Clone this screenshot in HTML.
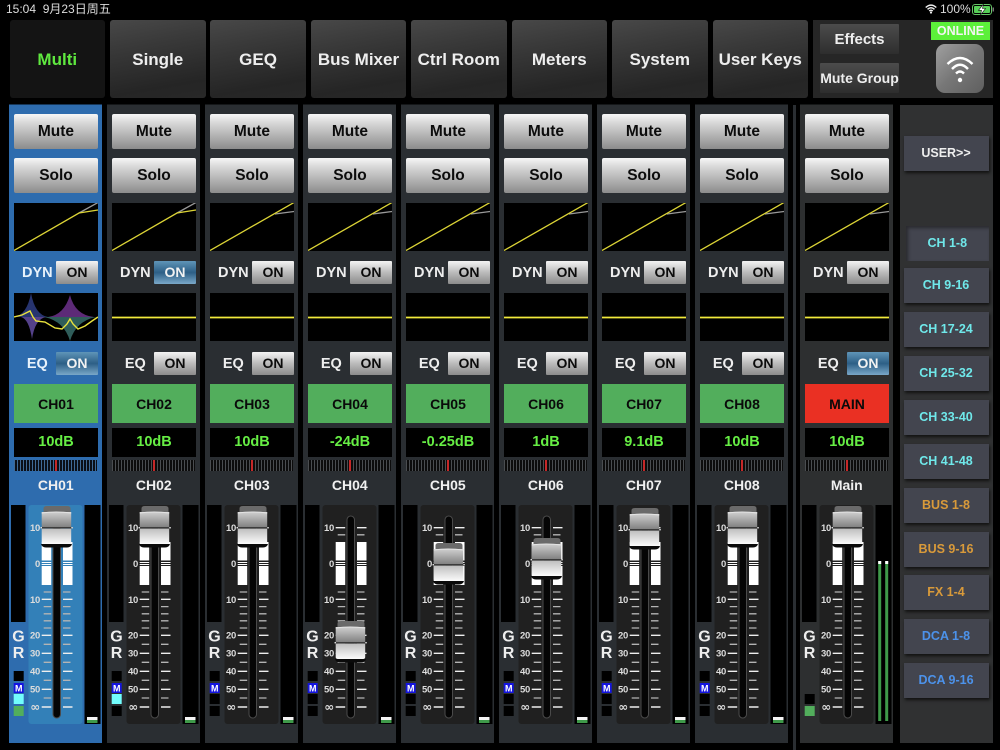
<!DOCTYPE html>
<html><head><meta charset="utf-8"><style>
html,body{margin:0;padding:0;background:#000;width:1000px;height:750px;overflow:hidden}
body{position:relative;font-family:"Liberation Sans","Noto Sans CJK SC",sans-serif;font-weight:bold}
div,b,i,svg.a,span{position:absolute;display:block;font-style:normal;box-sizing:border-box;text-align:center}
.st{top:2px;font-size:12px;font-weight:normal;color:#ddd;line-height:14px;white-space:pre}
.tab{top:19.5px;height:78px;width:95.5px;border-radius:3px;background:linear-gradient(170deg,#484848,#3a3a3a 30%,#252525 80%,#282828);color:#eee;font-size:17px;line-height:79px}
.tb2{background:linear-gradient(#4c4c4c,#2e2e2e);color:#eee;left:820px;width:79px;font-size:14px;height:30px;line-height:31px;border-radius:1px}
.s{top:0;width:93px;height:743px;background:linear-gradient(transparent 104.5px,var(--b,#2a2e32) 104.5px)}
.bt{left:4.7px;width:84px;height:34.5px;border-radius:2px;background:linear-gradient(#f6f6f6,#d8d8d8 25%,#8c8c8c);color:#0c0c0c;font-size:15.5px;line-height:36px}
.m{top:114px}.so{top:158px}
svg.g{position:absolute;left:4.7px;width:84px;height:48px;background:#000;display:block}
.g1{top:203px}.g2{top:293px}
.lb{left:8px;width:40px;color:#eee;font-size:14.5px;line-height:24px;height:24px}
.on{left:46.7px;width:42px;height:22.5px;border-radius:1px;background:linear-gradient(#f4f4f4,#bbb 50%,#8c8c8c);color:#0c0c0c;font-size:14px;line-height:22px}
.on.bl{background:linear-gradient(#5f95b8,#2d5f86 50%,#7aa8c8);color:#f2f2f2}
.d{top:261px}.e{top:352px}
.nm{left:4.7px;width:84px;top:384px;height:39px;background:#52ae5c;color:#0a0a0a;font-size:14px;line-height:40px}
.nm.r{background:#ea3023}
.vl{left:4.7px;width:84px;top:428px;height:29px;background:#000;color:#66ee44;font-size:14.5px;line-height:29px}
.pn{left:4.7px;width:83px;top:460px;height:10.5px;background:repeating-linear-gradient(90deg,#4a4d50 0 1px,#0c0c0c 1px 3px)}
.pn::after{content:"";position:absolute;left:41px;top:0;width:2px;height:10.5px;background:#c62828}
.n2{left:0;width:93px;top:476px;height:18px;color:#f0f0f0;font-size:14px;line-height:18px}
svg.f{position:absolute;left:0;top:0;width:93px;height:750px;display:block;overflow:visible}
svg.f text{font:bold 9.5px "Liberation Sans Narrow","Liberation Sans",sans-serif;fill:#dcdcdc;text-anchor:end;letter-spacing:-.3px}
svg.f text.w{font:bold 16px "Liberation Sans",sans-serif;fill:#eee;text-anchor:middle;letter-spacing:0}
svg.f text.mm{font:bold 9px "Liberation Sans",sans-serif;fill:#fff;text-anchor:middle;letter-spacing:0}
svg.f text.inf{font:bold 12px "DejaVu Sans",sans-serif}
.rb{left:903.5px;width:85px;height:35px;background:#43454f;box-shadow:1px 2px 3px #111;font-size:12.5px;line-height:35px;color:#6fe8ea}
.o{color:#d99a3a}.u{color:#4c92ea}
</style></head><body>
<svg class="a" width="0" height="0" style="position:absolute"><defs>
<g id="t">
<rect x="44" y="516" width="7.5" height="202" rx="3.8" fill="#050505" stroke="#4a4a4a"/>
<g fill="#fff"><rect x="32.7" y="542" width="9.5" height="18.5"/><rect x="54" y="542" width="9.5" height="18.5"/><rect x="32.7" y="566" width="9.5" height="19"/><rect x="54" y="566" width="9.5" height="19"/>
<rect x="32.7" y="562" width="9.5" height="1"/><rect x="54" y="562" width="9.5" height="1"/><rect x="32.7" y="564" width="9.5" height="1"/><rect x="54" y="564" width="9.5" height="1"/></g>
<path fill="none" stroke="#eee" stroke-width="1.4" d="M32.7 527.7h9.5M54 527.7h9.5M32.7 599.3h9.5M54 599.3h9.5M32.7 635.3h9.5M54 635.3h9.5M32.7 653.3h9.5M54 653.3h9.5M32.7 671.3h9.5M54 671.3h9.5M32.7 689.3h9.5M54 689.3h9.5M32.7 707h9.5M54 707h9.5"/>
<path fill="none" stroke="#b4b4b4" stroke-width="1.3" d="M34.7 534.8h7.5M54 534.8h7.5M34.7 592h7.5M54 592h7.5M34.7 606.6h7.5M54 606.6h7.5M34.7 613.8h7.5M54 613.8h7.5M34.7 620.8h7.5M54 620.8h7.5M34.7 628h7.5M54 628h7.5M34.7 644.3h7.5M54 644.3h7.5M34.7 662.3h7.5M54 662.3h7.5M34.7 680.3h7.5M54 680.3h7.5M34.7 698h7.5M54 698h7.5"/>
</g>
<linearGradient id="u" x1="0" y1="0" x2="0" y2="1"><stop offset="0" stop-color="#cfcfcf"/><stop offset="1" stop-color="#7d7d7d"/></linearGradient>
<linearGradient id="l" x1="0" y1="0" x2="0" y2="1"><stop offset="0" stop-color="#bfbfbf"/><stop offset="1" stop-color="#fbfbfb"/></linearGradient>
<g id="c">
<path d="M34.5 6V2.5Q34.5 0 38 0H58Q61.5 0 61.5 2.5V6z" fill="#6a6a6a"/>
<rect x="32.7" y="6" width="29.5" height="16" fill="url(#u)"/>
<path d="M32.7 7Q47 5 62.2 7" stroke="#e4e4e4" stroke-width="1" fill="none"/>
<rect x="32" y="21" width="31" height="1.6" fill="#3c3c3c"/>
<path d="M32.7 22.6H62.2V36Q62.2 38 60 38H35Q32.7 38 32.7 36z" fill="url(#l)"/>
<path d="M32 38Q33 41.5 37 41.5H58Q62 41.5 63 38z" fill="#0a0a0a"/>
<rect x="31.5" y="21" width="1.5" height="1.4" fill="#ddd"/><rect x="62.3" y="21" width="1.5" height="1.4" fill="#ddd"/>
</g>
<g id="k1" fill="none" stroke-width="1.3"><path d="M65 10L84 -.5" stroke="#999"/><path d="M0 47.5L65 10L84 7" stroke="#dcd436"/></g>
<g id="k2" fill="none" stroke-width="1.3"><path d="M65 11L84 8.500" stroke="#999"/><path d="M0 47.5L84 -.5" stroke="#dcd436"/></g>
<path id="fl" d="M0 24.500H84" stroke="#f2ea3c" stroke-width="1.800" fill="none"/>
</defs></svg>

<div class="st" style="left:6px">15:04  9月23日周五</div>
<svg class="a" style="left:925px;top:4px" width="12" height="10" viewBox="0 0 12 10"><path d="M.7 3.500Q6-1.300 11.300 3.500M2.500 5.300Q6 2.200 9.500 5.300M4.200 7Q6 5.500 7.800 7" fill="none" stroke="#eee" stroke-width="1.400"/><circle cx="6" cy="8.500" r="1.100" fill="#eee"/></svg>
<div class="st" style="left:940px">100%</div>
<svg class="a" style="left:972px;top:4px" width="23" height="11" viewBox="0 0 23 11"><rect x=".5" y=".5" width="19" height="10" rx="2.500" fill="none" stroke="#66c466"/><rect x="2" y="2" width="16" height="7" rx="1" fill="#58d058"/><rect x="20.500" y="3.500" width="1.500" height="4" fill="#777"/><path d="M11.500 0L6.500 6.300H9.500L8.500 11L13.500 4.500H10.500z" fill="#fff" stroke="#111" stroke-width=".6"/></svg>

<div class="tab" style="left:9.500px;background:#141414;color:#5fe83f">Multi</div>
<div class="tab" style="left:110px">Single</div>
<div class="tab" style="left:210.300px">GEQ</div>
<div class="tab" style="left:310.700px">Bus Mixer</div>
<div class="tab" style="left:411px">Ctrl Room</div>
<div class="tab" style="left:511.500px">Meters</div>
<div class="tab" style="left:612px">System</div>
<div class="tab" style="left:712.500px">User Keys</div>
<div style="left:813px;top:19.500px;width:179.500px;height:78px;background:#262626"></div>
<div class="tb2" style="top:24px;font-size:15px">Effects</div>
<div class="tb2" style="top:63px">Mute Group</div>
<div style="left:931px;top:22px;width:59px;height:17.500px;background:#5cf03a;color:#f4f4f4;font-size:12.500px;line-height:18px">ONLINE</div>
<div style="left:936px;top:44px;width:48px;height:49px;border-radius:9px;background:linear-gradient(135deg,#a0a0a0,#777 50%,#5f5f5f)"></div>
<svg class="a" style="left:946px;top:54px" width="28" height="30" viewBox="0 0 28 30"><path d="M1.500 10Q14-2 26.500 10M6 15Q14 6.500 22 15M10 19.500Q14 15.500 18 19.500" fill="none" stroke="#fff" stroke-width="2.400"/><circle cx="14" cy="26" r="2.200" fill="#fff"/></svg>
<div style="left:792.700px;top:104.500px;width:3.300px;height:645.500px;background:#2a2e32"></div>

<!-- CH01 -->
<div class="s" style="left:9.300px;--b:#2e6cae">
<b class="bt m">Mute</b><b class="bt so">Solo</b>
<svg class="g g1" viewBox="0 0 84 48"><use href="#k1"/></svg>
<i class="lb d" style="color:#e8f2fb">DYN</i><b class="on d">ON</b>
<svg class="g g2" viewBox="0 0 84 48">
<path d="M0 24Q13 22 17 0Q21 22 34 24z" fill="#27346f"/>
<path d="M7 24Q15 26 18 46Q21 26 32 24z" fill="#54418a"/>
<path d="M34 24Q50 22 56 2Q61 22 80 24z" fill="#5d2a77"/>
<path d="M30 24Q50 28 56 48Q62 28 82 24z" fill="#2f5d5a"/>
<path d="M0 24L8 22L16 18L19 24L22 28L31 29L41 35L48 36L53 31L56 26L59 31L64 36L71 33L78 28L84 24" fill="none" stroke="#e9e23c" stroke-width="1.400"/></svg>
<i class="lb e" style="color:#e8f2fb">EQ</i><b class="on e bl">ON</b>
<b class="nm">CH01</b><b class="vl">10dB</b><div class="pn" style="background:repeating-linear-gradient(90deg,#3f6a96 0 1px,#0a0f18 1px 3px)"></div><b class="n2">CH01</b>
<svg class="f"><rect x="2" y="505" width="14.500" height="117" fill="#000"/><rect x="19.500" y="505" width="54" height="219" rx="3" fill="#3380b8"/><rect x="75.500" y="505" width="16" height="219" fill="#000"/>
<use href="#t"/>
<text x="31" y="531">10</text><text x="31" y="567">0</text><text x="31" y="603">10</text><text x="31" y="638.500">20</text><text x="31" y="656.500">30</text><text x="31" y="674.500">40</text><text x="31" y="692.500">50</text><text class="inf" x="31" y="711">∞</text>
<use href="#c" y="506"/>
<text class="w" x="9.500" y="641.500">G</text><text class="w" x="9.500" y="658">R</text>
<rect x="4.700" y="671" width="10" height="10" fill="#000"/><rect x="4.700" y="683" width="10" height="10" fill="#1414e0"/><text class="mm" x="9.700" y="691.500">M</text><rect x="4.700" y="694" width="10" height="10" fill="#72fdfd"/><rect x="4.700" y="706" width="10" height="10" fill="#52ae5c"/>
<rect x="78" y="717" width="10.500" height="3" fill="#f4f4f4"/><rect x="78" y="720" width="10.500" height="3" fill="#3f9a4a"/></svg>
</div>

<!-- CH02 -->
<div class="s" style="left:107.300px">
<b class="bt m">Mute</b><b class="bt so">Solo</b>
<svg class="g g1" viewBox="0 0 84 48"><use href="#k1"/></svg>
<i class="lb d">DYN</i><b class="on d bl">ON</b>
<svg class="g g2" viewBox="0 0 84 48"><use href="#fl"/></svg>
<i class="lb e">EQ</i><b class="on e">ON</b>
<b class="nm">CH02</b><b class="vl">10dB</b><div class="pn"></div><b class="n2">CH02</b>
<svg class="f"><rect x="2" y="505" width="14.500" height="117" fill="#000"/><rect x="19.500" y="505" width="54" height="219" rx="3" fill="#202020"/><rect x="75.500" y="505" width="16" height="219" fill="#000"/>
<use href="#t"/>
<text x="31" y="531">10</text><text x="31" y="567">0</text><text x="31" y="603">10</text><text x="31" y="638.500">20</text><text x="31" y="656.500">30</text><text x="31" y="674.500">40</text><text x="31" y="692.500">50</text><text class="inf" x="31" y="711">∞</text>
<use href="#c" y="506"/>
<text class="w" x="9.500" y="641.500">G</text><text class="w" x="9.500" y="658">R</text>
<rect x="4.700" y="671" width="10" height="10" fill="#000"/><rect x="4.700" y="683" width="10" height="10" fill="#1414e0"/><text class="mm" x="9.700" y="691.500">M</text><rect x="4.700" y="694" width="10" height="10" fill="#72fdfd"/><rect x="4.700" y="706" width="10" height="10" fill="#000"/>
<rect x="78" y="717" width="10.500" height="3" fill="#f4f4f4"/><rect x="78" y="720" width="10.500" height="3" fill="#3f9a4a"/></svg>
</div>

<!-- CH03 -->
<div class="s" style="left:205.300px">
<b class="bt m">Mute</b><b class="bt so">Solo</b>
<svg class="g g1" viewBox="0 0 84 48"><use href="#k2"/></svg>
<i class="lb d">DYN</i><b class="on d">ON</b>
<svg class="g g2" viewBox="0 0 84 48"><use href="#fl"/></svg>
<i class="lb e">EQ</i><b class="on e">ON</b>
<b class="nm">CH03</b><b class="vl">10dB</b><div class="pn"></div><b class="n2">CH03</b>
<svg class="f"><rect x="2" y="505" width="14.500" height="117" fill="#000"/><rect x="19.500" y="505" width="54" height="219" rx="3" fill="#202020"/><rect x="75.500" y="505" width="16" height="219" fill="#000"/>
<use href="#t"/>
<text x="31" y="531">10</text><text x="31" y="567">0</text><text x="31" y="603">10</text><text x="31" y="638.500">20</text><text x="31" y="656.500">30</text><text x="31" y="674.500">40</text><text x="31" y="692.500">50</text><text class="inf" x="31" y="711">∞</text>
<use href="#c" y="506"/>
<text class="w" x="9.500" y="641.500">G</text><text class="w" x="9.500" y="658">R</text>
<rect x="4.700" y="671" width="10" height="10" fill="#000"/><rect x="4.700" y="683" width="10" height="10" fill="#1414e0"/><text class="mm" x="9.700" y="691.500">M</text><rect x="4.700" y="694" width="10" height="10" fill="#000"/><rect x="4.700" y="706" width="10" height="10" fill="#000"/>
<rect x="78" y="717" width="10.500" height="3" fill="#f4f4f4"/><rect x="78" y="720" width="10.500" height="3" fill="#3f9a4a"/></svg>
</div>

<!-- CH04 -->
<div class="s" style="left:303.300px">
<b class="bt m">Mute</b><b class="bt so">Solo</b>
<svg class="g g1" viewBox="0 0 84 48"><use href="#k2"/></svg>
<i class="lb d">DYN</i><b class="on d">ON</b>
<svg class="g g2" viewBox="0 0 84 48"><use href="#fl"/></svg>
<i class="lb e">EQ</i><b class="on e">ON</b>
<b class="nm">CH04</b><b class="vl">-24dB</b><div class="pn"></div><b class="n2">CH04</b>
<svg class="f"><rect x="2" y="505" width="14.500" height="117" fill="#000"/><rect x="19.500" y="505" width="54" height="219" rx="3" fill="#202020"/><rect x="75.500" y="505" width="16" height="219" fill="#000"/>
<use href="#t"/>
<text x="31" y="531">10</text><text x="31" y="567">0</text><text x="31" y="603">10</text><text x="31" y="638.500">20</text><text x="31" y="656.500">30</text><text x="31" y="674.500">40</text><text x="31" y="692.500">50</text><text class="inf" x="31" y="711">∞</text>
<use href="#c" y="621"/>
<text class="w" x="9.500" y="641.500">G</text><text class="w" x="9.500" y="658">R</text>
<rect x="4.700" y="671" width="10" height="10" fill="#000"/><rect x="4.700" y="683" width="10" height="10" fill="#1414e0"/><text class="mm" x="9.700" y="691.500">M</text><rect x="4.700" y="694" width="10" height="10" fill="#000"/><rect x="4.700" y="706" width="10" height="10" fill="#000"/>
<rect x="78" y="717" width="10.500" height="3" fill="#f4f4f4"/><rect x="78" y="720" width="10.500" height="3" fill="#3f9a4a"/></svg>
</div>

<!-- CH05 -->
<div class="s" style="left:401.300px">
<b class="bt m">Mute</b><b class="bt so">Solo</b>
<svg class="g g1" viewBox="0 0 84 48"><use href="#k2"/></svg>
<i class="lb d">DYN</i><b class="on d">ON</b>
<svg class="g g2" viewBox="0 0 84 48"><use href="#fl"/></svg>
<i class="lb e">EQ</i><b class="on e">ON</b>
<b class="nm">CH05</b><b class="vl">-0.25dB</b><div class="pn"></div><b class="n2">CH05</b>
<svg class="f"><rect x="2" y="505" width="14.500" height="117" fill="#000"/><rect x="19.500" y="505" width="54" height="219" rx="3" fill="#202020"/><rect x="75.500" y="505" width="16" height="219" fill="#000"/>
<use href="#t"/>
<text x="31" y="531">10</text><text x="31" y="567">0</text><text x="31" y="603">10</text><text x="31" y="638.500">20</text><text x="31" y="656.500">30</text><text x="31" y="674.500">40</text><text x="31" y="692.500">50</text><text class="inf" x="31" y="711">∞</text>
<use href="#c" y="543"/>
<text class="w" x="9.500" y="641.500">G</text><text class="w" x="9.500" y="658">R</text>
<rect x="4.700" y="671" width="10" height="10" fill="#000"/><rect x="4.700" y="683" width="10" height="10" fill="#1414e0"/><text class="mm" x="9.700" y="691.500">M</text><rect x="4.700" y="694" width="10" height="10" fill="#000"/><rect x="4.700" y="706" width="10" height="10" fill="#000"/>
<rect x="78" y="717" width="10.500" height="3" fill="#f4f4f4"/><rect x="78" y="720" width="10.500" height="3" fill="#3f9a4a"/></svg>
</div>

<!-- CH06 -->
<div class="s" style="left:499.300px">
<b class="bt m">Mute</b><b class="bt so">Solo</b>
<svg class="g g1" viewBox="0 0 84 48"><use href="#k2"/></svg>
<i class="lb d">DYN</i><b class="on d">ON</b>
<svg class="g g2" viewBox="0 0 84 48"><use href="#fl"/></svg>
<i class="lb e">EQ</i><b class="on e">ON</b>
<b class="nm">CH06</b><b class="vl">1dB</b><div class="pn"></div><b class="n2">CH06</b>
<svg class="f"><rect x="2" y="505" width="14.500" height="117" fill="#000"/><rect x="19.500" y="505" width="54" height="219" rx="3" fill="#202020"/><rect x="75.500" y="505" width="16" height="219" fill="#000"/>
<use href="#t"/>
<text x="31" y="531">10</text><text x="31" y="567">0</text><text x="31" y="603">10</text><text x="31" y="638.500">20</text><text x="31" y="656.500">30</text><text x="31" y="674.500">40</text><text x="31" y="692.500">50</text><text class="inf" x="31" y="711">∞</text>
<use href="#c" y="538"/>
<text class="w" x="9.500" y="641.500">G</text><text class="w" x="9.500" y="658">R</text>
<rect x="4.700" y="671" width="10" height="10" fill="#000"/><rect x="4.700" y="683" width="10" height="10" fill="#1414e0"/><text class="mm" x="9.700" y="691.500">M</text><rect x="4.700" y="694" width="10" height="10" fill="#000"/><rect x="4.700" y="706" width="10" height="10" fill="#000"/>
<rect x="78" y="717" width="10.500" height="3" fill="#f4f4f4"/><rect x="78" y="720" width="10.500" height="3" fill="#3f9a4a"/></svg>
</div>

<!-- CH07 -->
<div class="s" style="left:597.300px">
<b class="bt m">Mute</b><b class="bt so">Solo</b>
<svg class="g g1" viewBox="0 0 84 48"><use href="#k2"/></svg>
<i class="lb d">DYN</i><b class="on d">ON</b>
<svg class="g g2" viewBox="0 0 84 48"><use href="#fl"/></svg>
<i class="lb e">EQ</i><b class="on e">ON</b>
<b class="nm">CH07</b><b class="vl">9.1dB</b><div class="pn"></div><b class="n2">CH07</b>
<svg class="f"><rect x="2" y="505" width="14.500" height="117" fill="#000"/><rect x="19.500" y="505" width="54" height="219" rx="3" fill="#202020"/><rect x="75.500" y="505" width="16" height="219" fill="#000"/>
<use href="#t"/>
<text x="31" y="531">10</text><text x="31" y="567">0</text><text x="31" y="603">10</text><text x="31" y="638.500">20</text><text x="31" y="656.500">30</text><text x="31" y="674.500">40</text><text x="31" y="692.500">50</text><text class="inf" x="31" y="711">∞</text>
<use href="#c" y="508"/>
<text class="w" x="9.500" y="641.500">G</text><text class="w" x="9.500" y="658">R</text>
<rect x="4.700" y="671" width="10" height="10" fill="#000"/><rect x="4.700" y="683" width="10" height="10" fill="#1414e0"/><text class="mm" x="9.700" y="691.500">M</text><rect x="4.700" y="694" width="10" height="10" fill="#000"/><rect x="4.700" y="706" width="10" height="10" fill="#000"/>
<rect x="78" y="717" width="10.500" height="3" fill="#f4f4f4"/><rect x="78" y="720" width="10.500" height="3" fill="#3f9a4a"/></svg>
</div>

<!-- CH08 -->
<div class="s" style="left:695.300px">
<b class="bt m">Mute</b><b class="bt so">Solo</b>
<svg class="g g1" viewBox="0 0 84 48"><use href="#k2"/></svg>
<i class="lb d">DYN</i><b class="on d">ON</b>
<svg class="g g2" viewBox="0 0 84 48"><use href="#fl"/></svg>
<i class="lb e">EQ</i><b class="on e">ON</b>
<b class="nm">CH08</b><b class="vl">10dB</b><div class="pn"></div><b class="n2">CH08</b>
<svg class="f"><rect x="2" y="505" width="14.500" height="117" fill="#000"/><rect x="19.500" y="505" width="54" height="219" rx="3" fill="#202020"/><rect x="75.500" y="505" width="16" height="219" fill="#000"/>
<use href="#t"/>
<text x="31" y="531">10</text><text x="31" y="567">0</text><text x="31" y="603">10</text><text x="31" y="638.500">20</text><text x="31" y="656.500">30</text><text x="31" y="674.500">40</text><text x="31" y="692.500">50</text><text class="inf" x="31" y="711">∞</text>
<use href="#c" y="506"/>
<text class="w" x="9.500" y="641.500">G</text><text class="w" x="9.500" y="658">R</text>
<rect x="4.700" y="671" width="10" height="10" fill="#000"/><rect x="4.700" y="683" width="10" height="10" fill="#1414e0"/><text class="mm" x="9.700" y="691.500">M</text><rect x="4.700" y="694" width="10" height="10" fill="#000"/><rect x="4.700" y="706" width="10" height="10" fill="#000"/>
<rect x="78" y="717" width="10.500" height="3" fill="#f4f4f4"/><rect x="78" y="720" width="10.500" height="3" fill="#3f9a4a"/></svg>
</div>

<!-- MAIN -->
<div class="s" style="left:800.300px;--b:#2d2f30">
<b class="bt m">Mute</b><b class="bt so">Solo</b>
<svg class="g g1" viewBox="0 0 84 48"><use href="#k2"/></svg>
<i class="lb d">DYN</i><b class="on d">ON</b>
<svg class="g g2" viewBox="0 0 84 48"><use href="#fl"/></svg>
<i class="lb e">EQ</i><b class="on e bl">ON</b>
<b class="nm r">MAIN</b><b class="vl">10dB</b><div class="pn"></div><b class="n2">Main</b>
<svg class="f"><rect x="2" y="505" width="14.500" height="117" fill="#000"/><rect x="19.500" y="505" width="54" height="219" rx="3" fill="#202020"/><rect x="75.500" y="505" width="16" height="219" fill="#000"/>
<use href="#t"/>
<text x="31" y="531">10</text><text x="31" y="567">0</text><text x="31" y="603">10</text><text x="31" y="638.500">20</text><text x="31" y="656.500">30</text><text x="31" y="674.500">40</text><text x="31" y="692.500">50</text><text class="inf" x="31" y="711">∞</text>
<use href="#c" y="506"/>
<text class="w" x="9.500" y="641.500">G</text><text class="w" x="9.500" y="658">R</text>
<rect x="4.700" y="694" width="10" height="10" fill="#000"/><rect x="4.700" y="706" width="10" height="10" fill="#52ae5c"/>
<rect x="78.200" y="561" width="3" height="160" fill="#3f9a4a"/><rect x="85.200" y="561" width="3" height="160" fill="#3f9a4a"/><rect x="78.200" y="561" width="3" height="3" fill="#fff"/><rect x="85.200" y="561" width="3" height="3" fill="#fff"/></svg>
</div>

<!-- Right panel -->
<div style="left:899.500px;top:104.500px;width:93px;height:638.500px;background:#303132"></div>
<div class="rb" style="top:136px;color:#eee">USER&gt;&gt;</div>
<div class="rb" style="top:226px;left:906px;width:82.500px;box-shadow:inset 2px 2px 3px #2a2a2f">CH 1-8</div>
<div class="rb" style="top:268px">CH 9-16</div>
<div class="rb" style="top:312px">CH 17-24</div>
<div class="rb" style="top:356px">CH 25-32</div>
<div class="rb" style="top:400px">CH 33-40</div>
<div class="rb" style="top:444px">CH 41-48</div>
<div class="rb o" style="top:488px">BUS 1-8</div>
<div class="rb o" style="top:532px">BUS 9-16</div>
<div class="rb o" style="top:575px">FX 1-4</div>
<div class="rb u" style="top:619px">DCA 1-8</div>
<div class="rb u" style="top:663px">DCA 9-16</div>
</body></html>
